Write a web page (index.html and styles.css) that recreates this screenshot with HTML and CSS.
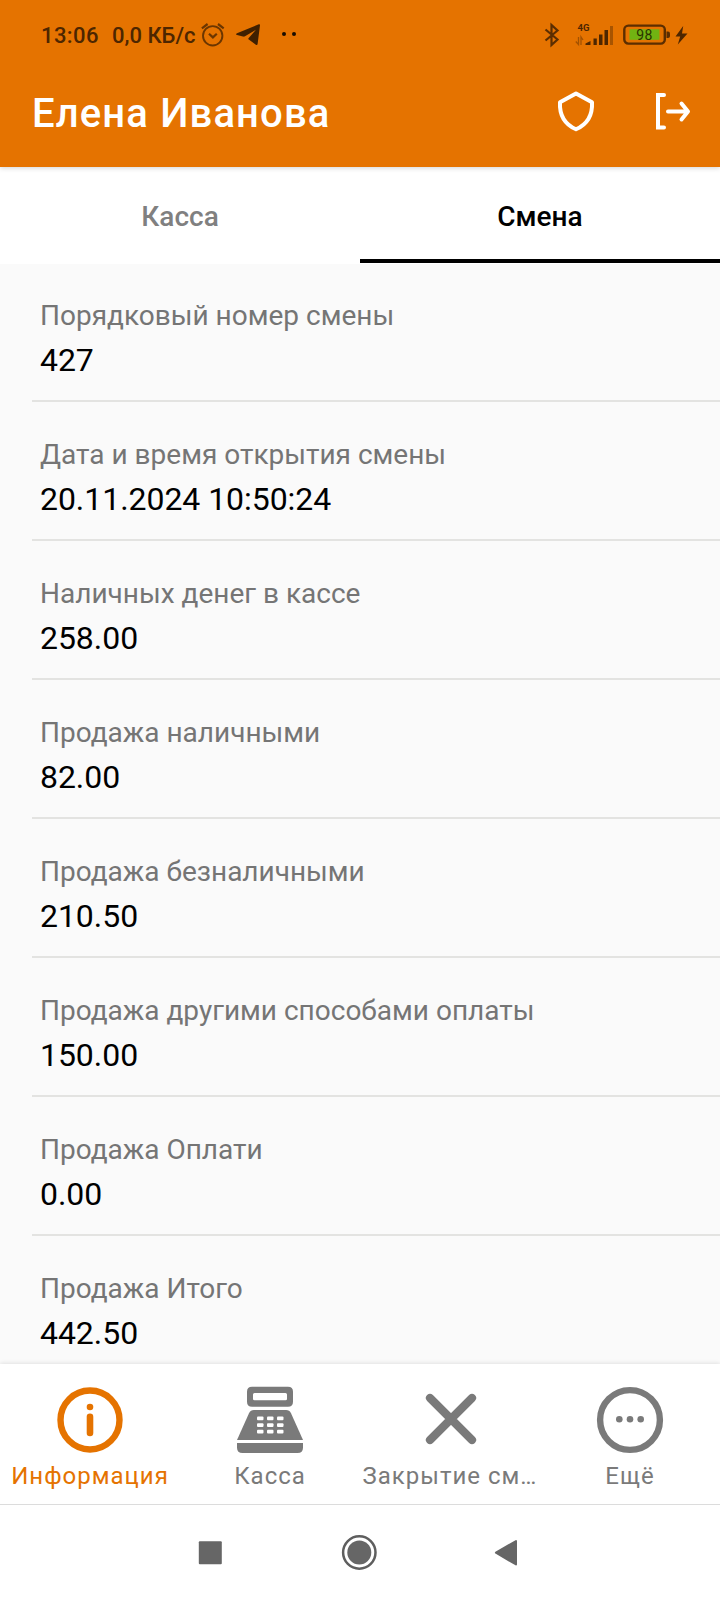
FILE: index.html
```
<!DOCTYPE html>
<html lang="ru">
<head>
  <meta charset="UTF-8">
  <meta name="viewport" content="width=device-width, initial-scale=1.0">
  <title>Смена</title>
  <link rel="stylesheet" href="styles.css">
</head>
<body>
  <header class="header">
    <div class="status-bar">
      <span class="time">13:06</span>
      <span class="speed">0,0 КБ/с</span>
      <svg class="alarm" width="24" height="24" viewBox="0 0 24 24" fill="none" stroke="#6b3600" stroke-width="1.9">
        <circle cx="11.700" cy="12.800" r="9.700"/>
        <path d="M.9 5.300 6.600 1M22.700 5.300 17 1" stroke-width="2.200"/>
        <path d="m8 10.800 3.900 3.600 3.900-3.600" stroke-width="2.200"/>
      </svg>
      <svg class="telegram" width="24" height="22" viewBox="0 0 24 22">
        <path d="M22.800.3C23.600 0 24.100.5 24 1.300L21.600 20c-.1 1-.9 1.300-1.700.8l-7.100-5.200c-.7-.5-.7-1.100-.1-1.700L20 5.800 9 12.300c-.7.4-1.300.4-2 .2L1 11c-1.200-.3-1.200-1.300 0-1.800z" fill="#3f2000"/>
      </svg>
      <span class="dots"><i></i><i></i></span>
      <div class="status-right">
        <svg class="bluetooth" width="16" height="24" viewBox="0 0 16 24" fill="none" stroke="#5c2e00" stroke-width="2.200">
          <path d="m1.500 6.500 12 10L7.500 22V2l6 5.500-12 10"/>
        </svg>
        <svg class="signal" width="39" height="24" viewBox="0 0 39 24">
          <text x="2.500" y="8" class="net">4G</text>
          <path d="M3.500 14v7.500L.8 18.500M6 22v-8l2 3" fill="none" stroke="#a35200" stroke-width="1.300"/>
          <path d="M10.500 22v-1.500l5-2.500v4zM18.500 15.500h3.300V22h-3.300zM24 11.500h3.500V22H24zM29.500 7H33v15h-3.500z" fill="#4d2600"/>
          <path d="M35 3h3v19h-3z" fill="#a85400"/>
        </svg>
        <svg class="battery" width="48" height="22" viewBox="0 0 48 22">
          <rect x="1.300" y="1.600" width="40.500" height="18" rx="4" fill="none" stroke="#5c2e00" stroke-width="2.400"/>
          <rect x="6.500" y="5.300" width="30" height="10.500" fill="#71b312"/>
          <path d="M43.500 7.500h1.500q2 0 2 2v2.500q0 2-2 2h-1.500z" fill="#5c2e00"/>
          <text x="21.600" y="15.700" text-anchor="middle" class="charge">98</text>
        </svg>
        <svg class="bolt" width="13" height="19" viewBox="0 0 13 19">
          <path d="M8.200 0 .5 10.500h4.700L2.800 18.600 12.500 7.500H7z" fill="#4d2600"/>
        </svg>
      </div>
    </div>
    <div class="toolbar">
      <h1 class="title">Елена Иванова</h1>
      <svg class="shield" width="38" height="42" viewBox="0 0 38 42" fill="none" stroke="#fff" stroke-width="4" stroke-linejoin="round">
        <path d="M19 2.500 3 11.300C2.300 24.300 8 33.300 19 38.300 30 33.300 35.700 24.300 35 11.300z"/>
      </svg>
      <svg class="logout" width="36" height="38" viewBox="0 0 36 38" fill="none" stroke="#fff" stroke-width="4" stroke-linecap="round" stroke-linejoin="round">
        <path d="M9 2H3v32.500h6" stroke-linejoin="miter"/>
        <path d="M13 18.500h19M26.500 10.500l6.500 8-6.500 8"/>
      </svg>
    </div>
  </header>

  <nav class="tabs">
    <a class="tab">Касса</a>
    <a class="tab active">Смена</a>
  </nav>

  <main class="list">
    <div class="row">
      <div class="label">Порядковый номер смены</div>
      <div class="value">427</div>
    </div>
    <div class="row">
      <div class="label">Дата и время открытия смены</div>
      <div class="value">20.11.2024 10:50:24</div>
    </div>
    <div class="row">
      <div class="label">Наличных денег в кассе</div>
      <div class="value">258.00</div>
    </div>
    <div class="row">
      <div class="label">Продажа наличными</div>
      <div class="value">82.00</div>
    </div>
    <div class="row">
      <div class="label">Продажа безналичными</div>
      <div class="value">210.50</div>
    </div>
    <div class="row">
      <div class="label">Продажа другими способами оплаты</div>
      <div class="value">150.00</div>
    </div>
    <div class="row">
      <div class="label">Продажа Оплати</div>
      <div class="value">0.00</div>
    </div>
    <div class="row">
      <div class="label">Продажа Итого</div>
      <div class="value">442.50</div>
    </div>
  </main>

  <nav class="bottom-nav">
    <a class="nav-item active">
      <svg width="68" height="68" viewBox="0 0 68 68">
        <circle cx="34" cy="34" r="29.500" fill="none" stroke="currentColor" stroke-width="6.400"/>
        <circle cx="34" cy="21" r="3.300" fill="currentColor"/>
        <rect x="30.700" y="27.500" width="6.600" height="22.700" rx="3.300" fill="currentColor"/>
      </svg>
      <span class="nav-label">Информация</span>
    </a>
    <a class="nav-item">
      <svg width="68" height="68" viewBox="0 0 68 68" fill="currentColor">
        <path fill-rule="evenodd" d="M16 .7h36q5 0 5 5v10q0 5-5 5H16q-5 0-5-5v-10q0-5 5-5zM18.500 7q-1.500 0-1.500 1.500V13q0 1.200 1.500 1.200h31q1.500 0 1.500-1.200V8.500Q51 7 49.500 7z"/>
        <path d="M18 24h32q3.500 0 5 3.200L67 54H1l12-26.800Q14.500 24 18 24z"/>
        <path d="M1 57h66v4.500q0 5.500-5.500 5.500h-55Q1 67 1 61.500z"/>
        <g fill="#fff">
          <rect x="21" y="30.500" width="6.500" height="3.800" rx="1"/>
          <rect x="31" y="30.500" width="6.500" height="3.800" rx="1"/>
          <rect x="41" y="30.500" width="6.500" height="3.800" rx="1"/>
          <rect x="21" y="37.200" width="6.500" height="3.800" rx="1"/>
          <rect x="31" y="37.200" width="6.500" height="3.800" rx="1"/>
          <rect x="41" y="37.200" width="6.500" height="3.800" rx="1"/>
          <rect x="21" y="43.800" width="6.500" height="3.800" rx="1"/>
          <rect x="31" y="43.800" width="6.500" height="3.800" rx="1"/>
          <rect x="41" y="43.800" width="6.500" height="3.800" rx="1"/>
        </g>
      </svg>
      <span class="nav-label">Касса</span>
    </a>
    <a class="nav-item">
      <svg width="68" height="68" viewBox="0 0 68 68" fill="none" stroke="currentColor" stroke-width="8.200" stroke-linecap="round">
        <path d="m14 12 42 42M56 12 14 54"/>
      </svg>
      <span class="nav-label">Закрытие см…</span>
    </a>
    <a class="nav-item">
      <svg width="68" height="68" viewBox="0 0 68 68" fill="currentColor">
        <circle cx="34" cy="34" r="29.900" fill="none" stroke="currentColor" stroke-width="6.400"/>
        <circle cx="23.300" cy="33.300" r="3.300"/>
        <circle cx="34" cy="33.300" r="3.300"/>
        <circle cx="44.700" cy="33.300" r="3.300"/>
      </svg>
      <span class="nav-label">Ещё</span>
    </a>
  </nav>

  <footer class="system-nav">
    <svg width="24" height="24" viewBox="0 0 24 24">
      <rect x=".8" y=".3" width="23" height="23" rx="1" fill="#666"/>
    </svg>
    <svg width="36" height="36" viewBox="0 0 36 36">
      <circle cx="18.300" cy="17.500" r="16.200" fill="none" stroke="#5e5e5e" stroke-width="2.500"/>
      <circle cx="18.300" cy="17.500" r="12" fill="#666"/>
    </svg>
    <svg width="24" height="28" viewBox="0 0 24 28">
      <path d="M20 2v23.500L-.1 13.700z" fill="#666" stroke="#666" stroke-width="2" stroke-linejoin="round"/>
    </svg>
  </footer>
</body>
</html>
```

FILE: styles.css
```
* {
  box-sizing: border-box;
}
body {
  margin: 0;
  width: 720px;
  height: 1600px;
  display: flex;
  flex-direction: column;
  overflow: hidden;
  background: #fafafa;
  font-family: Roboto, "Noto Sans", sans-serif;
}
svg {
  display: block;
  flex: none;
  overflow: visible;
}
.header {
  height: 167px;
  flex: none;
  background: #e57300;
  box-shadow: 0 1px 5px rgba(0, 0, 0, 0.18);
  z-index: 1;
}
.status-bar {
  display: flex;
  align-items: center;
  height: 70px;
  padding: 0 32px 0 41px;
  color: #4d2600;
  font-size: 22px;
  font-weight: 500;
}
.time {
  width: 71px;
  letter-spacing: 0.4px;
}
.speed {
  width: 89px;
}
.telegram {
  margin-left: 11px;
}
.dots {
  display: flex;
  gap: 6px;
  margin-left: 22px;
  padding-bottom: 2px;
}
.dots i {
  width: 4px;
  height: 4px;
  border-radius: 50%;
  background: #1a0d00;
}
.status-right {
  display: flex;
  align-items: center;
  margin-left: auto;
}
.signal {
  margin-left: 15px;
}
.battery {
  margin-left: 9px;
}
.bolt {
  margin-left: 4px;
}
.net {
  font-size: 9.5px;
  font-weight: 700;
  fill: #4d2600;
}
.charge {
  font-size: 14px;
  font-weight: 400;
  letter-spacing: 0.5px;
  fill: #2b3300;
}
.toolbar {
  display: flex;
  align-items: center;
  height: 84px;
  padding: 0 29px 0 32px;
}
.title {
  margin: 0;
  padding-top: 2px;
  flex: 1;
  color: #fff;
  font-size: 40px;
  font-weight: 500;
  letter-spacing: 1.15px;
}
.logout {
  margin-left: 60px;
}
.tabs {
  display: flex;
  flex: none;
  height: 97px;
  padding-bottom: 1px;
  background: #fff;
}
.tab {
  flex: 1;
  display: flex;
  align-items: center;
  justify-content: center;
  padding-top: 6px;
  border-bottom: 4px solid transparent;
  color: #808080;
  font-size: 28px;
  font-weight: 500;
}
.tab.active {
  color: #000;
  border-bottom-color: #000;
}
.list {
  flex: 1;
  min-height: 0;
  overflow: hidden;
  margin-top: -1px;
  padding-left: 32px;
}
.row {
  height: 139px;
  padding: 36px 0 0 8px;
  border-bottom: 2px solid #e3e3e1;
}
.label {
  color: #757575;
  font-size: 28px;
  line-height: 34px;
}
.value {
  margin-top: 8px;
  color: #000;
  font-size: 32px;
  line-height: 38px;
  letter-spacing: -0.05px;
}
.bottom-nav {
  display: flex;
  flex: none;
  height: 141px;
  padding-top: 22px;
  background: #fff;
  border-bottom: 1px solid #dcdcdc;
  box-shadow: 0 -1px 4px rgba(0, 0, 0, 0.1);
}
.nav-item {
  width: 180px;
  display: flex;
  flex-direction: column;
  align-items: center;
  color: #7a7a7a;
}
.nav-item.active {
  color: #e57300;
}
.nav-label {
  margin-top: 7px;
  white-space: nowrap;
  font-size: 24px;
  line-height: 30px;
  letter-spacing: 1px;
}
.system-nav {
  display: flex;
  flex: none;
  align-items: center;
  height: 95px;
  padding-left: 198px;
  background: #fff;
  gap: 119px;
}
```
